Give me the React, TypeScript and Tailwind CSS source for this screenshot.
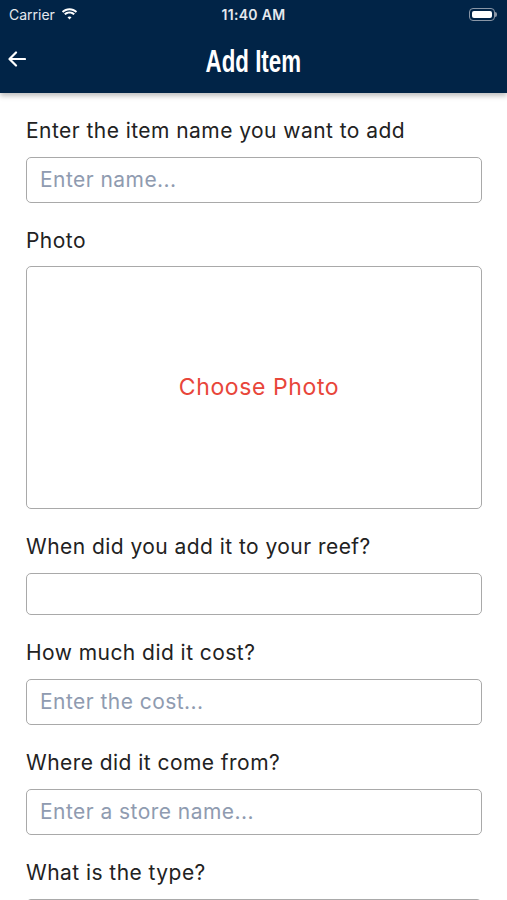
const Field = ({ label, placeholder, h = "h-[46px]" }: { label: string; placeholder?: string; h?: string }) => (
  <div className="mt-[26px]">
    <p className="text-[21px] leading-[24px] tracking-[0.45px] text-[#222]">{label}</p>
    <div className={`mt-[14px] ${h} border border-[#a9a9a9] rounded-[5px] flex items-center px-[13px]`}>
      {placeholder && <span className="text-[21px] tracking-[0.45px] text-[#8f9bb0]">{placeholder}</span>}
    </div>
  </div>
)

const App = () => {
  return (
    <div className="w-[507px] h-[900px] overflow-hidden bg-white" style={{ fontFamily: "Inter, 'Noto Sans', sans-serif" }}>
      {/*--- Header ---*/}
      <header className="bg-[#012447] h-[93px] shadow-[0_3px_5px_rgba(0,0,0,0.25)] relative z-10">
        <div className="h-[28px] flex items-center justify-between px-[9px] text-white relative">
          <div className="flex items-center gap-[6px]">
            <span className="text-[14px] text-[#e6e9ee]">Carrier</span>
            <svg width="17" height="12" viewBox="0 0 17 12" fill="white">
              <path d="M8.5 2.2c2.4 0 4.6.9 6.3 2.5l1.3-1.4C14 1.3 11.4.2 8.5.2S3 1.3.9 3.3l1.3 1.4C3.9 3.1 6.1 2.2 8.5 2.2z" />
              <path d="M8.5 5.4c1.6 0 3 .6 4.1 1.6l1.3-1.4C12.5 4.2 10.6 3.4 8.5 3.4S4.5 4.2 3.1 5.6L4.4 7c1.1-1 2.5-1.6 4.1-1.6z" />
              <path d="M8.5 8.4c.8 0 1.5.3 2 .8L8.5 11.4 6.5 9.2c.5-.5 1.2-.8 2-.8z" />
            </svg>
          </div>
          <span className="absolute left-0 right-0 text-center text-[14px] font-semibold tracking-[0.3px] text-[#e6e9ee]">11:40 AM</span>
          <div className="flex items-center mr-[1px]">
            <div className="w-[26px] h-[13px] rounded-[4px] border border-[#8a96a6] p-[2px]">
              <div className="w-full h-full bg-white rounded-[2px]" />
            </div>
            <div className="w-[2px] h-[5px] bg-[#8a96a6] rounded-r-sm" />
          </div>
        </div>
        <div className="h-[65px] flex items-center justify-center relative">
          <svg className="absolute left-[8px] top-[23px]" width="18" height="16" viewBox="0 0 18 16" fill="none" stroke="white" strokeWidth="2.2" strokeLinecap="round" strokeLinejoin="round">
            <path d="M17 8H2M8 1.5L1.5 8 8 14.5" />
          </svg>
          <h1 className="inline-block text-white text-[31px] font-bold scale-x-[0.72] mt-[4px]" style={{ fontFamily: "'Liberation Sans', Arial, sans-serif" }}>
            Add Item
          </h1>
        </div>
      </header>

      {/*--- Form ---*/}
      <main className="px-[26px] pr-[25px]">
        <Field label="Enter the item name you want to add" placeholder="Enter name..." />

        <div className="mt-[26px]">
          <p className="text-[21px] leading-[24px] tracking-[0.45px] text-[#222]">Photo</p>
          <div className="mt-[13px] h-[243px] border border-[#a9a9a9] rounded-[5px] flex items-center justify-center pl-[10px]">
            <span className="text-[23px] tracking-[0.6px] text-[#e8463a]">Choose Photo</span>
          </div>
        </div>

        <Field label="When did you add it to your reef?" h="h-[42px]" />
        <Field label="How much did it cost?" placeholder="Enter the cost..." />
        <Field label="Where did it come from?" placeholder="Enter a store name..." />
        <Field label="What is the type?" />
      </main>
    </div>
  )
}

export default App
